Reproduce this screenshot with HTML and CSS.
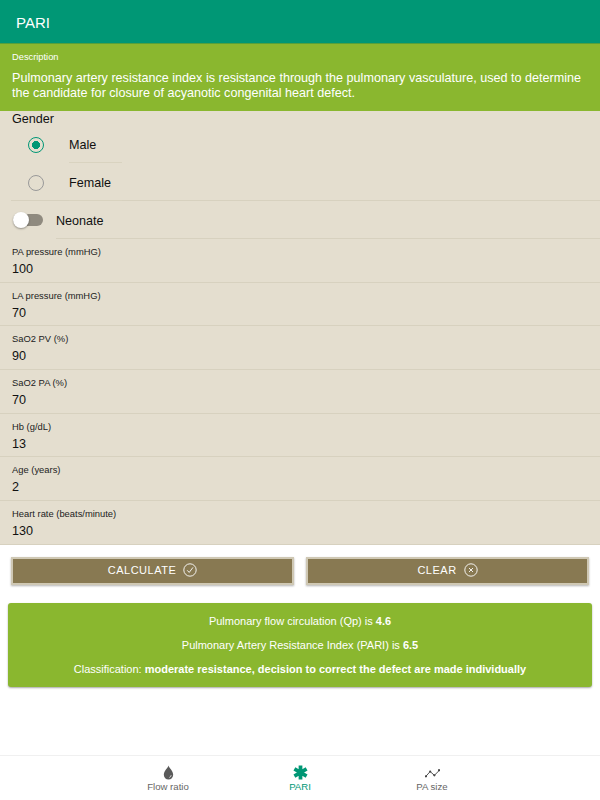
FILE: index.html
```html
<!DOCTYPE html>
<html lang="en">
<head>
  <meta charset="UTF-8">
  <meta name="viewport" content="width=device-width, initial-scale=1.0">
  <title>PARI</title>
  <link rel="stylesheet" href="styles.css">
</head>
<body>
  <header class="app-bar">PARI</header>

  <section class="description">
    <div class="description-label">Description</div>
    <p class="description-text">Pulmonary artery resistance index is resistance through the pulmonary vasculature, used to determine the candidate for closure of acyanotic congenital heart defect.</p>
  </section>

  <section class="form">
    <div class="group-label">Gender</div>
    <div class="radio-group">
      <div class="radio-row">
        <span class="radio radio-on"></span>
        <span class="radio-text">Male</span>
      </div>
      <div class="radio-row">
        <span class="radio"></span>
        <span class="radio-text">Female</span>
      </div>
    </div>
    <div class="toggle-row">
      <span class="toggle"><span class="toggle-knob"></span></span>
      <span class="toggle-text">Neonate</span>
    </div>
    <div class="field"><label>PA pressure (mmHG)</label><div class="value">100</div></div>
    <div class="field"><label>LA pressure (mmHG)</label><div class="value">70</div></div>
    <div class="field"><label>SaO2 PV (%)</label><div class="value">90</div></div>
    <div class="field"><label>SaO2 PA (%)</label><div class="value">70</div></div>
    <div class="field"><label>Hb (g/dL)</label><div class="value">13</div></div>
    <div class="field"><label>Age (years)</label><div class="value">2</div></div>
    <div class="field"><label>Heart rate (beats/minute)</label><div class="value">130</div></div>
  </section>

  <div class="actions">
    <button class="btn">CALCULATE
      <svg class="btn-icon" viewBox="0 0 14 14"><circle cx="7" cy="7" r="6.200"/><path d="M4.200 7.300l2 2.100 3.800-5"/></svg>
    </button>
    <button class="btn">CLEAR
      <svg class="btn-icon" viewBox="0 0 14 14"><circle cx="7" cy="7" r="6.200"/><path d="M5 5l4 4M9 5l-4 4"/></svg>
    </button>
  </div>

  <section class="result">
    <p>Pulmonary flow circulation (Qp) is <b>4.6</b></p>
    <p>Pulmonary Artery Resistance Index (PARI) is <b>6.5</b></p>
    <p>Classification: <b>moderate resistance, decision to correct the defect are made individually</b></p>
  </section>

  <nav class="tabs">
    <div class="tab">
      <svg class="tab-icon" viewBox="0 0 16 16"><path fill="#5a5a5a" d="M8 .5c.6 2.500 5 5.800 5 10a5 5 0 0 1-10 0C3 6.300 7.400 3 8 .5z"/><path fill="none" stroke="#eee" stroke-width=".9" d="M10.800 10.900a2.800 2.800 0 0 1-1.900 2.400"/></svg>
      <span>Flow ratio</span>
    </div>
    <div class="tab tab-active">
      <svg class="tab-icon" viewBox="0 0 16 16"><path fill="none" stroke="#009775" stroke-width="4" d="M8 .5v15M1.500 4.250l13 7.500M14.500 4.250l-13 7.500"/></svg>
      <span>PARI</span>
    </div>
    <div class="tab">
      <svg class="tab-icon" viewBox="0 0 16 16"><path fill="none" stroke="#444" stroke-width="1" d="M.5 12.500l5-5.500 4.500 4 5.500-5.500"/><g fill="#444"><circle cx="5.500" cy="7" r="1.200"/><circle cx="10" cy="11" r="1.200"/><circle cx="15" cy="5.500" r="1.200"/><circle cx="1" cy="12" r="1.200"/></g></svg>
      <span>PA size</span>
    </div>
  </nav>
</body>
</html>
```

FILE: styles.css
```css
* {
  box-sizing: border-box;
}
html, body {
  height: 100%;
}
body {
  margin: 0;
  display: flex;
  flex-direction: column;
  font-family: "Liberation Sans", Arial, sans-serif;
  background-color: #fff;
  color: #111;
}
.app-bar {
  height: 44px;
  padding: 1px 16px 0;
  line-height: 44px;
  font-size: 15px;
  font-weight: 500;
  color: #fff;
  background-color: #009775;
  border-bottom: 1px solid #56a03c;
}
.description {
  height: 67px;
  padding: 8px 11px 0 12px;
  color: #fff;
  background-color: #8ab72f;
}
.description-label {
  font-size: 9.300px;
  line-height: 11px;
}
.description-text {
  margin: 8px 0 0;
  font-size: 12.600px;
  line-height: 14.500px;
}
.form {
  height: 434px;
  background-color: #e4decf;
}
.group-label {
  height: 15px;
  padding: 1px 0 0 12px;
  font-size: 12.600px;
  line-height: 15px;
}
.radio-group {
  margin-left: 11px;
  height: 75px;
  border-bottom: 1px solid #d7d1bf;
}
.radio-row {
  height: 37.500px;
  display: flex;
  align-items: center;
  gap: 25px;
  padding: 1px 0 0 17px;
}
.radio {
  width: 16px;
  height: 16px;
  flex: none;
  border: 1.500px solid #999;
  border-radius: 50%;
}
.radio-on {
  border-color: #009775;
  background: radial-gradient(circle, #009775 0 3.800px, transparent 4.300px);
}
.radio-text {
  width: 53px;
  height: 37px;
  margin-top: -1px;
  line-height: 38px;
  font-size: 12.600px;
  border-bottom: 1px solid #d9d3c0;
}
.toggle-row {
  height: 38px;
  display: flex;
  align-items: center;
  gap: 13px;
  padding-left: 13px;
}
.toggle {
  position: relative;
  width: 30px;
  height: 12px;
  flex: none;
  margin-top: -1px;
  border-radius: 6px;
  background-color: #8f8a7f;
}
.toggle-knob {
  position: absolute;
  top: -2px;
  left: 0;
  width: 16px;
  height: 16px;
  border-radius: 50%;
  background-color: #fff;
  box-shadow: 0 1px 2px rgba(0, 0, 0, 0.35);
}
.toggle-text {
  flex: 1;
  height: 38px;
  line-height: 40px;
  font-size: 12.600px;
  border-bottom: 1px solid #d7d1bf;
}
.field {
  height: 43.700px;
  padding: 7px 12px 0;
  border-bottom: 1px solid #d7d1bf;
}
.field label {
  display: block;
  font-size: 9.400px;
  line-height: 11px;
  color: #222;
}
.value {
  margin-top: 5px;
  font-size: 12.600px;
  line-height: 15px;
}
.actions {
  display: flex;
  gap: 12px;
  padding: 12px 11px 0;
}
.btn {
  flex: 1;
  height: 28px;
  display: flex;
  align-items: center;
  justify-content: center;
  gap: 7px;
  padding-bottom: 3px;
  font-family: inherit;
  font-size: 11px;
  letter-spacing: 0.500px;
  color: #fff;
  background-color: #887952;
  border: 2px solid #cfc8b4;
  box-shadow: 0 1px 2px rgba(0, 0, 0, 0.3);
}
.btn-icon {
  width: 14px;
  height: 14px;
  fill: none;
  stroke: #fff;
  stroke-width: 0.900;
}
.result {
  margin: 18px 8px 0;
  height: 84px;
  padding-top: 12px;
  text-align: center;
  font-size: 11px;
  line-height: 13px;
  color: #fff;
  background-color: #8ab72f;
  border-radius: 3px;
  box-shadow: 0 1px 2px rgba(0, 0, 0, 0.35);
}
.result p {
  margin: 0 0 11px;
}
.tabs {
  margin-top: auto;
  height: 45px;
  display: flex;
  justify-content: center;
  padding: 9px 0 0;
  border-top: 1px solid #f0f0f0;
}
.tab {
  width: 132px;
  display: flex;
  flex-direction: column;
  align-items: center;
  font-size: 9.600px;
  line-height: 11px;
  color: #666;
}
.tab-icon {
  width: 15px;
  height: 15px;
  margin-bottom: 1px;
}
.tab-active {
  color: #009775;
}
```
